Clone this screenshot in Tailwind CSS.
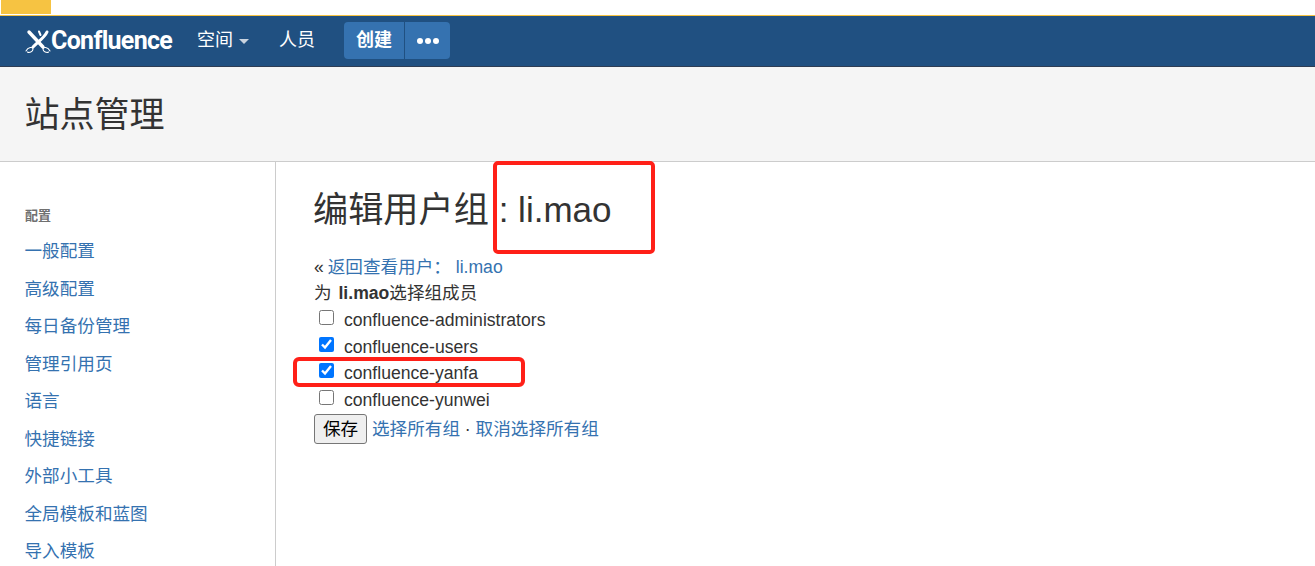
<!DOCTYPE html>
<html lang="zh">
<head>
<meta charset="utf-8">
<script src="https://cdn.jsdelivr.net/npm/@tailwindcss/browser@4"></script>
</head>
<body class="relative h-[566px] w-[1315px] overflow-hidden bg-white font-['Liberation_Sans','Noto_Sans_CJK_SC',sans-serif] text-[17.6px] text-[#333]">
  <div class="h-4 border-b border-[#f6c342]"><div class="ml-px h-[14px] w-[50px] bg-[#f6c342]"></div></div>
  <nav class="flex h-[51px] items-center border-b border-[#2e3d54] bg-[#205081] pb-px text-[18px] text-white">
    <div class="ml-[25px] flex w-[148px] items-center">
      <svg width="26" height="26" viewBox="0 0 26 26" class="shrink-0" fill="none" stroke="white" stroke-linecap="round">
        <path d="M4 4 L18 19" stroke-width="3.4"/>
        <path d="M22 4 C20 9 13 14 8 19" stroke-width="3"/>
        <path d="M14 3.5 L15.5 7" stroke-width="2"/>
        <path d="M1 23 C3 19 8 18.5 8 21 C8 24 4 25 2.5 24" stroke-width="1.1"/>
        <path d="M25 23 C23 19 18 18.5 18 21 C18 24 22 25 23.5 24" stroke-width="1.1"/>
      </svg>
      <span class="font-['Roboto',sans-serif] text-[25px] font-bold leading-none tracking-[-0.7px] whitespace-nowrap">Confluence</span>
    </div>
    <div class="ml-6 flex items-center gap-[6px]"><span>空间</span><span class="mt-px h-0 w-0 border-x-[5px] border-t-[5px] border-x-transparent border-t-[#c9d3df]"></span></div>
    <span class="ml-[30px]">人员</span>
    <div class="ml-[29px] flex h-[37px] overflow-hidden rounded-[4px] bg-[#3572b0]">
      <span class="flex w-[60px] items-center justify-center font-bold">创建</span>
      <span class="flex w-[46px] items-center justify-center gap-[2px] border-l border-[#205081]">
        <i class="size-[6px] rounded-full bg-white"></i><i class="size-[6px] rounded-full bg-white"></i><i class="size-[6px] rounded-full bg-white"></i>
      </span>
    </div>
  </nav>
  <header class="flex h-[95px] items-center border-b border-[#ccc] bg-[#f5f5f5] px-[25px]">
    <h1 class="-ml-[0.5px] text-[35px] leading-none">站点管理</h1>
  </header>
  <div class="flex h-[405px] overflow-hidden">
    <aside class="w-[276px] shrink-0 border-r border-[#ccc] pl-[25px] pt-[46px] text-[#3572b0]">
      <h2 class="mb-[9px] text-[13px] font-bold leading-[16px] text-[#707070]">配置</h2>
      <ul class="-ml-[0.5px] leading-[37.5px]">
        <li>一般配置</li><li>高级配置</li><li>每日备份管理</li><li>管理引用页</li><li>语言</li><li>快捷链接</li><li>外部小工具</li><li>全局模板和蓝图</li><li>导入模板</li>
      </ul>
    </aside>
    <main class="pl-[38px] pt-[23px]">
      <h1 class="mb-[20px] text-[35px] leading-[50px]"><span class="-ml-px text-[35.2px]">编辑用户组</span> : li.mao</h1>
      <p class="-ml-px pl-px leading-[25px]">« <a class="-ml-px text-[#3572b0]">返回查看用户： li.mao</a></p>
      <p class="mt-px leading-[25px]">为 <b class="ml-[2px]">li.mao</b>选择组成员</p>
      <ul class="mt-px leading-[26.7px]">
        <li class="flex items-center"><input type="checkbox" class="relative top-[-3px] ml-[5px] mr-[10px] size-[15px] accent-[#0075ff]"><span>confluence-administrators</span></li>
        <li class="flex items-center"><input type="checkbox" checked class="relative top-[-3px] ml-[5px] mr-[10px] size-[15px] accent-[#0075ff]"><span>confluence-users</span></li>
        <li class="flex items-center"><input type="checkbox" checked class="relative top-[-3px] ml-[5px] mr-[10px] size-[15px] accent-[#0075ff]"><span>confluence-yanfa</span></li>
        <li class="flex items-center"><input type="checkbox" class="relative top-[-3px] ml-[5px] mr-[10px] size-[15px] accent-[#0075ff]"><span>confluence-yunwei</span></li>
      </ul>
      <div class="flex items-center">
        <button class="flex h-[30px] w-[53px] items-center justify-center rounded-[3px] border border-[#767676] bg-[#efefef] text-black">保存</button>
        <span class="ml-[5px] text-[#3572b0]">选择所有组 <span class="text-[#333]">·</span> 取消选择所有组</span>
      </div>
    </main>
  </div>
  <div class="absolute left-[493px] top-[161px] h-[93px] w-[162px] rounded-[5px] border-4 border-[#ff2018]"></div>
  <div class="absolute left-[293px] top-[357px] h-[30px] w-[232px] rounded-[6px] border-4 border-[#ff2018]"></div>
</body>
</html>
